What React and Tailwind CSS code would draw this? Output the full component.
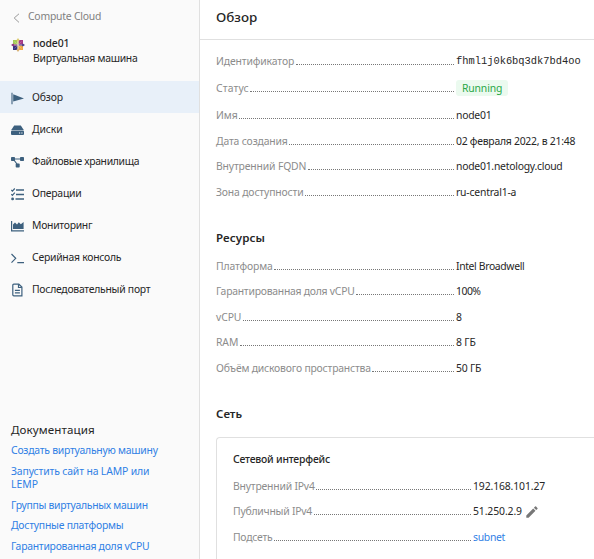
import React from 'react';

const navIcons = {
  flag: (
    <>
      <path d="M1 1.8v11.4" stroke="#3d607e" strokeWidth="1.1" />
      <path d="M2.2 3.2 13 7.6 2.2 10.6z" fill="#3d607e" />
    </>
  ),
  disk: (
    <>
      <path d="M3.2 2.6h6.6L12.8 7H.2z" fill="#3d607e" />
      <rect x="0" y="7.6" width="13" height="4.4" rx="1" fill="#3d607e" />
      <path d="M8 10h1.2M10.3 10h1.2" stroke="#fafafa" strokeWidth="1.2" />
    </>
  ),
  nodes: (
    <>
      <path d="M2 4h9M2.2 4l4.5 6" stroke="#3d607e" strokeWidth="1.2" fill="none" />
      <rect x="0" y="2" width="4" height="4" rx=".8" fill="#3d607e" />
      <rect x="9" y="2" width="4" height="4" rx=".8" fill="#3d607e" />
      <rect x="4.7" y="8.6" width="4" height="4" rx=".8" fill="#3d607e" />
    </>
  ),
  tasks: (
    <g stroke="#3d607e" strokeWidth="1.2" fill="none">
      <path d="M5 3.1h8M5 7.5h8M4.5 11.9H13" strokeWidth="1.5" />
      <path d="m.3 3 1.1 1.1L3.8 1.5M.3 7.2l1.1 1.1L3.8 5.7" />
      <circle cx="1.6" cy="11.9" r=".8" fill="#3d607e" />
    </g>
  ),
  chart: (
    <>
      <path d="M.6 2v9.9H13" stroke="#3d607e" strokeWidth="1.2" fill="none" />
      <path d="M2 10V5.6l2-2 2 1.8 1.8-2.2 2 2L12.6 3v7z" fill="#3d607e" />
    </>
  ),
  console: (
    <path d="m.5 3 4.2 4.3L.5 11.6M6.3 11.6H13" stroke="#3d607e" strokeWidth="1.2" fill="none" />
  ),
  file: (
    <g stroke="#3d607e" strokeWidth="1.2" fill="none">
      <path d="M2.8 1.2h5L10.9 4v8.8H2.8a1 1 0 0 1-1-1V2.2a1 1 0 0 1 1-1z" />
      <path d="M7.5 1.3v3.2h3.3M3.9 7.3h5M3.9 9.9h5" />
    </g>
  ),
};

const nav = [
  ['flag', 'Обзор', 'tracking-[-0.15px]'],
  ['disk', 'Диски', 'tracking-[-0.1px]'],
  ['nodes', 'Файловые хранилища', 'tracking-[-0.33px]'],
  ['tasks', 'Операции', 'tracking-[-0.22px]'],
  ['chart', 'Мониторинг', 'tracking-[-0.28px]'],
  ['console', 'Серийная консоль', 'tracking-[-0.25px]'],
  ['file', 'Последовательный порт', 'tracking-[-0.26px]'],
];

function CentosLogo() {
  return (
    <svg className="block h-[14px] w-[14px] shrink-0" viewBox="0 0 14 14">
      <rect x="2" y="2" width="4.5" height="4.5" fill="#a5cd55" />
      <rect x="7.5" y="2" width="4.5" height="4.5" fill="#a63a86" />
      <rect x="2" y="7.5" width="4.5" height="4.5" fill="#39347f" />
      <rect x="7.5" y="7.5" width="4.5" height="4.5" fill="#efaa43" />
      <path d="M7 0 8.6 2.2 7.4 3.2v3.3h-.8V3.2L5.4 2.2z" fill="#dccb70" />
      <path d="m14 7-2.2 1.6-1-1.2H7.5v-.8h3.3l1-1.2z" fill="#4c3f8a" />
      <path d="m7 14-1.6-2.2 1.2-1V7.5h.8v3.3l1.2 1z" fill="#d9b070" />
      <path d="m0 7 2.2-1.6 1 1.2h3.3v.8H3.2l-1 1.2z" fill="#8f347f" />
      <path d="m3.5 3.5 7 7M10.5 3.5l-7 7" stroke="#fff" strokeOpacity=".35" strokeWidth=".6" />
    </svg>
  );
}

function Row({ label, children, height = 'h-[25.6px]', spacing = 'tracking-[-0.16px]', valueSpacing = 'tracking-[-0.25px]' }) {
  return (
    <div className={`flex items-center ${height}`}>
      <div className="flex h-[14px] w-[240px] shrink-0 items-end pr-[2px]">
        <span className={`whitespace-nowrap leading-[14px] text-[#8c8c8c] ${spacing}`}>{label}</span>
        <span className="mb-[3px] ml-[1.5px] flex-1 border-b border-dotted border-[#777]" />
      </div>
      <div className={`flex items-center whitespace-nowrap leading-[14px] ${valueSpacing}`}>{children}</div>
    </div>
  );
}

function Sidebar() {
  return (
    <aside className="flex w-[200px] shrink-0 flex-col border-r border-[#e0e0e0] bg-[#fafafa]">
      <div className="flex h-[33px] items-center pl-[13px] text-[#808080]">
        <svg className="mt-[2px] h-[10px] w-[7px]" viewBox="0 0 7 10" fill="none" stroke="#999">
          <path d="M6 .8 1.2 5 6 9.4" />
        </svg>
        <span className="ml-[8px] tracking-[-0.22px]">Compute Cloud</span>
      </div>
      <div className="flex h-[48px] pl-[11px] pt-[3px] leading-[15px]">
        <div className="pt-[2px]">
          <CentosLogo />
        </div>
        <div className="ml-[8px] whitespace-nowrap">
          <div className="font-medium tracking-[-0.15px]">node01</div>
          <div className="tracking-[-0.28px]">Виртуальная машина</div>
        </div>
      </div>
      <nav>
        {nav.map(([icon, label, spacing], i) => (
          <a key={label} className={`flex h-[32px] items-center pl-[11px] ${i === 0 ? 'bg-[#e8f0f9]' : ''}`}>
            <svg className="mt-[1px] h-[14px] w-[13px] shrink-0" viewBox="0 0 13 14">
              {navIcons[icon]}
            </svg>
            <span className={`ml-[8px] mt-[1px] whitespace-nowrap ${spacing}`}>{label}</span>
          </a>
        ))}
      </nav>
      <div className="mt-auto pl-[11px] text-[#2f80e5]">
        <h3 className="mb-[5.5px] text-[11.6px] leading-[16px] tracking-[0.1px] text-[#262626]">Документация</h3>
        <ul className="flex flex-col gap-[7.5px] leading-[13px]">
          <li className="mb-[1px] tracking-[-0.24px]">Создать виртуальную машину</li>
          <li>
            <span className="tracking-[-0.14px]">Запустить сайт на LAMP или</span>
            <br />
            LEMP
          </li>
          <li className="tracking-[-0.29px]">Группы виртуальных машин</li>
          <li className="tracking-[-0.23px]">Доступные платформы</li>
          <li className="pb-[6.5px] tracking-[-0.26px]">Гарантированная доля vCPU</li>
        </ul>
      </div>
    </aside>
  );
}

export default function App() {
  return (
    <div className="flex h-[559px] w-[594px] overflow-hidden bg-white font-['Noto_Sans',sans-serif] text-[10.4px] text-[#262626]">
      <Sidebar />
      <main className="min-w-0 flex-1">
        <header className="flex h-[40px] items-center border-b border-[#e0e0e0] pb-[4px] pl-[16px]">
          <h1 className="text-[13.4px] font-medium">Обзор</h1>
        </header>
        <div className="pl-[16px]">
          <section className="pt-[7.5px]">
            <Row label="Идентификатор" height="h-[27px]" spacing="tracking-[-0.13px]" valueSpacing="tracking-normal">
              <span className="font-['Liberation_Mono',monospace]">fhml1j0k6bq3dk7bd4oo</span>
            </Row>
            <Row label="Статус" height="h-[27px]" spacing="tracking-[0.1px]" valueSpacing="tracking-[-0.15px]">
              <span className="flex h-[16px] items-center rounded-[3px] bg-[#ebfaef] px-[6px] text-[#28a745]">Running</span>
            </Row>
            <Row label="Имя" height="h-[26.5px]" spacing="tracking-[-0.1px]">node01</Row>
            <Row label="Дата создания">02 февраля 2022, в 21:48</Row>
            <Row label="Внутренний FQDN">node01.netology.cloud</Row>
            <Row label="Зона доступности" valueSpacing="tracking-[-0.2px]">ru-central1-a</Row>
          </section>
          <h2 className="mt-[25px] text-[11.5px] font-semibold leading-[16px] tracking-[0.1px]">Ресурсы</h2>
          <section className="mt-[7px]">
            <Row label="Платформа" valueSpacing="tracking-[-0.36px]">Intel Broadwell</Row>
            <Row label="Гарантированная доля vCPU" spacing="tracking-[-0.25px]" valueSpacing="tracking-[-0.5px]">100%</Row>
            <Row label="vCPU" spacing="tracking-[-0.1px]">8</Row>
            <Row label="RAM" spacing="tracking-[-0.1px]" valueSpacing="tracking-[-0.15px]">8 ГБ</Row>
            <Row label="Объём дискового пространства" spacing="tracking-[-0.2px]" valueSpacing="tracking-[-0.2px]">50 ГБ</Row>
          </section>
          <h2 className="mt-[25px] text-[11.5px] font-semibold leading-[16px]">Сеть</h2>
          <section className="mt-[15px] h-[140px] rounded-tl-[4px] border-l border-t border-[#e0e0e0] pl-[16px] pt-[14px]">
            <h3 className="mb-[6px] font-medium leading-[15px] tracking-[-0.2px]">Сетевой интерфейс</h3>
            <Row label="Внутренний IPv4" spacing="tracking-[-0.2px]" valueSpacing="tracking-[-0.12px]">192.168.101.27</Row>
            <Row label="Публичный IPv4" spacing="tracking-[-0.23px]" valueSpacing="tracking-[-0.1px]">
              51.250.2.9
              <svg className="ml-[4px] mt-[1px] h-[12px] w-[12px]" viewBox="0 0 12 12" fill="#777">
                <path d="M.3 9.4 7.2 2.5l2.3 2.3-6.9 6.9H.3zM7.9 1.8 9.1.6q.5-.5 1 0l1.3 1.3q.5.5 0 1l-1.2 1.2z" />
              </svg>
            </Row>
            <Row label="Подсеть" spacing="tracking-[-0.25px]" valueSpacing="tracking-[-0.3px]"><span className="text-[#2f80e5]">subnet</span></Row>
          </section>
        </div>
      </main>
    </div>
  );
}
